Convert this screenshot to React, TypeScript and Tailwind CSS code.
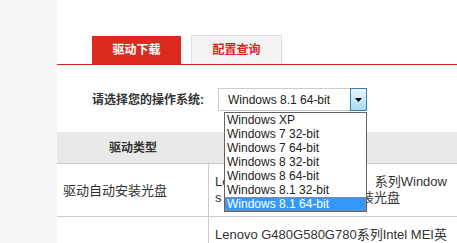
const options = [
  "Windows XP",
  "Windows 7 32-bit",
  "Windows 7 64-bit",
  "Windows 8 32-bit",
  "Windows 8 64-bit",
  "Windows 8.1 32-bit",
  "Windows 8.1 64-bit",
];

export default function App() {
  const selected = "Windows 8.1 64-bit";
  return (
    <div className="flex h-[243px] w-[457px] overflow-hidden bg-white font-['Liberation_Sans','Noto_Sans_CJK_SC',sans-serif] text-[#333]">
      <div className="w-[57px] shrink-0 bg-[#f7f7f7]" />
      <div className="min-w-0 flex-1">
        {/* tabs */}
        <div className="flex items-end gap-[10px] border-b border-[#d9261c] pl-[35px] pt-[35px]">
          <div className="flex h-[28px] w-[89px] items-center justify-center bg-[#db2a1f] text-[12px] font-bold text-white">
            驱动下载
          </div>
          <div className="flex h-[29px] w-[91px] items-center justify-center border border-b-0 border-[#ddd] bg-[#f3f3f3] text-[12px] font-bold text-[#d9261c]">
            配置查询
          </div>
        </div>

        {/* os select */}
        <div className="mt-[23px] flex items-center pl-[35px]">
          <div className="w-[126px] text-[12px] font-bold">请选择您的操作系统:</div>
          <div className="relative flex h-[23px] w-[149px]">
            <div className="flex flex-1 items-center border-y border-l border-[#ccc] pl-[9px] text-[12px] text-[#222]">
              {selected}
            </div>
            <div className="flex w-[17px] items-center justify-center border border-[#3c7fb1] bg-gradient-to-b from-[#eaf6fd] to-[#a7d9f5]">
              <svg width="7" height="4" viewBox="0 0 7 4">
                <path d="M0 0h7L3.5 4z" fill="#000" />
              </svg>
            </div>
            <ul className="absolute left-[6px] top-[24px] z-10 w-[143px] border border-[#646464] bg-white">
              {options.map((o) => (
                <li
                  key={o}
                  className={
                    o === selected
                      ? "h-[14px] border border-dotted border-[#c08040] bg-[#3399ff] pl-[1px] text-[12px] leading-[12px] text-white"
                      : "h-[14px] pl-[2px] text-[12px] leading-[14px] text-[#222]"
                  }
                >
                  {o}
                </li>
              ))}
            </ul>
          </div>
        </div>

        {/* table */}
        <div className="mt-[21px] w-[412px]">
          <div className="grid h-[32px] grid-cols-[152px_260px] border-b border-[#ccc] bg-[#e9e9e9] text-[12px] font-bold">
            <div className="flex items-center justify-center">驱动类型</div>
            <div className="flex items-center justify-center">驱动名称</div>
          </div>
          <div className="grid min-h-[53px] grid-cols-[152px_260px] border-b border-[#ccc]">
            <div className="flex items-center border-r border-[#ccc] pl-[6px] pt-[2px] text-[13px]">驱动自动安装光盘</div>
            <div className="flex items-center pl-[6px]">
              <p className="w-[233px] break-all text-[13px] leading-[16px]">
                Lenovo G480G580G780&nbsp;&nbsp;&nbsp;&nbsp; 系列Windows 8.1 64-bit 版驱动自动安装光盘
              </p>
            </div>
          </div>
          <div className="grid min-h-[84px] grid-cols-[152px_260px] border-b border-[#ccc]">
            <div className="flex items-center border-r border-[#ccc] pl-[6px] text-[13px]">芯片组驱动程序</div>
            <div className="pl-[6px] pt-[10px]">
              <p className="w-[233px] break-all text-[13px] leading-[16px]">
                Lenovo G480G580G780系列Intel MEI英特尔管理引擎接口驱动程序 Windows 8.1 64-bit
              </p>
            </div>
          </div>
        </div>
      </div>
    </div>
  );
}
